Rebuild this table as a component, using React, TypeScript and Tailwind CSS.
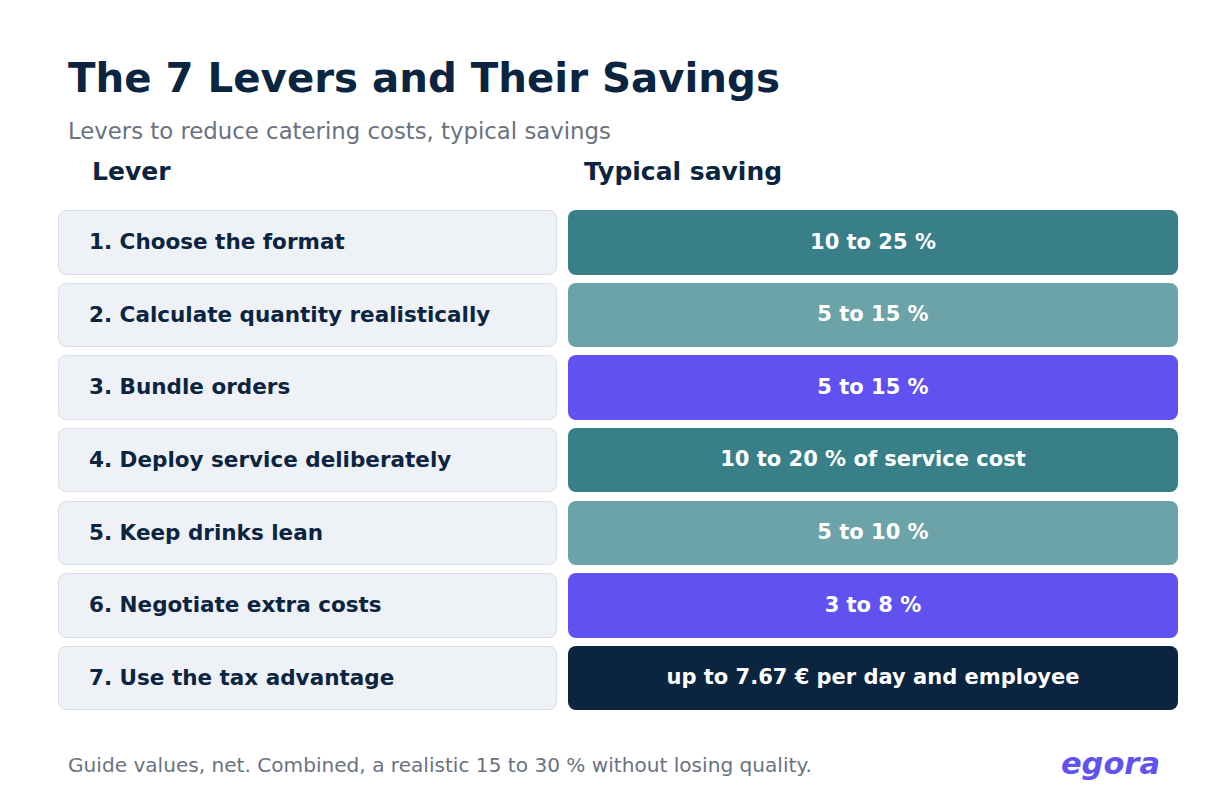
const levers = [
  { name: "1. Choose the format", saving: "10 to 25 %", tone: "bg-[#387f87]" },
  { name: "2. Calculate quantity realistically", saving: "5 to 15 %", tone: "bg-[#6ba3a8]" },
  { name: "3. Bundle orders", saving: "5 to 15 %", tone: "bg-[#5f52f0]" },
  { name: "4. Deploy service deliberately", saving: "10 to 20 % of service cost", tone: "bg-[#387f87]" },
  { name: "5. Keep drinks lean", saving: "5 to 10 %", tone: "bg-[#6ba3a8]" },
  { name: "6. Negotiate extra costs", saving: "3 to 8 %", tone: "bg-[#5f52f0]" },
  { name: "7. Use the tax advantage", saving: "up to 7.67 € per day and employee", tone: "bg-[#0b2541]" },
];

export default function App() {
  return (
    <div className="w-[1230px] h-[800px] bg-white font-['DejaVu_Sans',sans-serif] text-[#0b2541]">
      <div className="pl-[68px] pt-[55px]">
        <h1 className="text-[40.3px] leading-[48px] font-bold">The 7 Levers and Their Savings</h1>
        <p className="mt-[14px] text-[22.8px] leading-[28px] text-[#6b7280]">
          Levers to reduce catering costs, typical savings
        </p>
      </div>

      <div className="ml-[58px] mt-[11px] grid grid-cols-[499px_610px] gap-x-[11px]">
        <div className="pl-[34px] text-[25px] leading-[32px] font-bold">Lever</div>
        <div className="pl-[16px] text-[25px] leading-[32px] font-bold">Typical saving</div>
      </div>

      <div className="ml-[58px] mt-[22px] flex flex-col gap-[8.17px]">
        {levers.map((l) => (
          <div key={l.name} className="grid grid-cols-[499px_610px] gap-x-[11px] h-[64.5px]">
            <div className="flex items-center rounded-[8px] border border-[#d9dee7] bg-[#eef1f6] pl-[30px] text-[21.5px] font-bold">
              {l.name}
            </div>
            <div className={`flex items-center justify-center rounded-[8px] ${l.tone} text-[21px] font-bold text-white`}>
              {l.saving}
            </div>
          </div>
        ))}
      </div>

      <div className="mt-[38px] pl-[68px] pr-[70px] flex items-center justify-between">
        <p className="text-[20.1px] leading-[24px] text-[#6b7280]">
          Guide values, net. Combined, a realistic 15 to 30 % without losing quality.
        </p>
        <span className="mb-[2px] text-[30.5px] leading-[32px] font-bold italic text-[#5f52f0]">egora</span>
      </div>
    </div>
  );
}
